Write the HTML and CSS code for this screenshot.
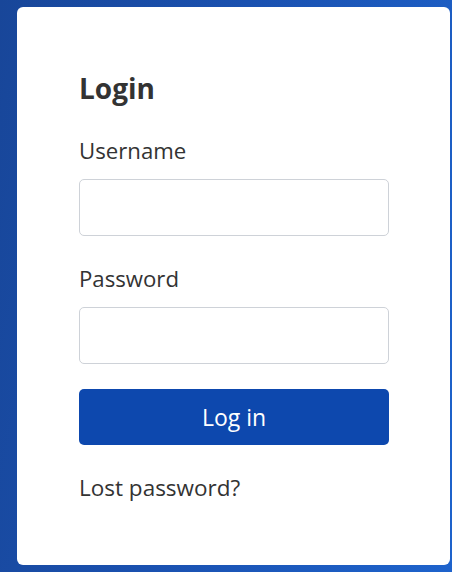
FILE: index.html
```html
<!DOCTYPE html>
<html lang="en">
<head>
<meta charset="utf-8">
<title>Login</title>
<link rel="stylesheet" href="styles.css">
</head>
<body>
<main class="card">
  <h1 class="title">Login</h1>
  <form class="form">
    <label class="field">
      <span class="label">Username</span>
      <input class="input" type="text">
    </label>
    <label class="field">
      <span class="label">Password</span>
      <input class="input" type="password">
    </label>
    <button class="btn" type="button">Log in</button>
  </form>
  <a class="lost" href="#">Lost password?</a>
</main>
</body>
</html>
```

FILE: styles.css
```css
html, body {
  margin: 0;
  height: 100%;
}
body {
  box-sizing: border-box;
  padding: 7px 2px 7px 17px;
  background: linear-gradient(100deg, #184699 0%, #1a51b0 45%, #1e63cc 100%);
  font-family: "Open Sans", "Noto Sans", sans-serif;
  color: #333;
}
.card {
  box-sizing: border-box;
  height: 558px;
  background: #fff;
  border-radius: 6px;
  padding: 61px 61px 0 62px;
}
.title {
  margin: 0;
  font-size: 28px;
  font-weight: 700;
  line-height: 40px;
  color: #333;
}
.form {
  display: flex;
  flex-direction: column;
  margin-top: 28px;
}
.field {
  display: flex;
  flex-direction: column;
}
.label {
  font-size: 22.2px;
  line-height: 30px;
  margin-bottom: 13px;
}
.input {
  box-sizing: border-box;
  height: 57px;
  border: 1px solid #ced2d8;
  border-radius: 5px;
  margin: 0 0 28px;
  font: inherit;
}
.field + .field .input {
  margin-bottom: 25px;
}
.btn {
  height: 56px;
  border: 0;
  border-radius: 5px;
  background: #0d48ae;
  color: #fff;
  font-family: inherit;
  font-size: 23px;
  cursor: pointer;
}
.lost {
  display: block;
  margin-top: 28px;
  font-size: 22.5px;
  line-height: 30px;
  color: #333;
  text-decoration: none;
}
```
